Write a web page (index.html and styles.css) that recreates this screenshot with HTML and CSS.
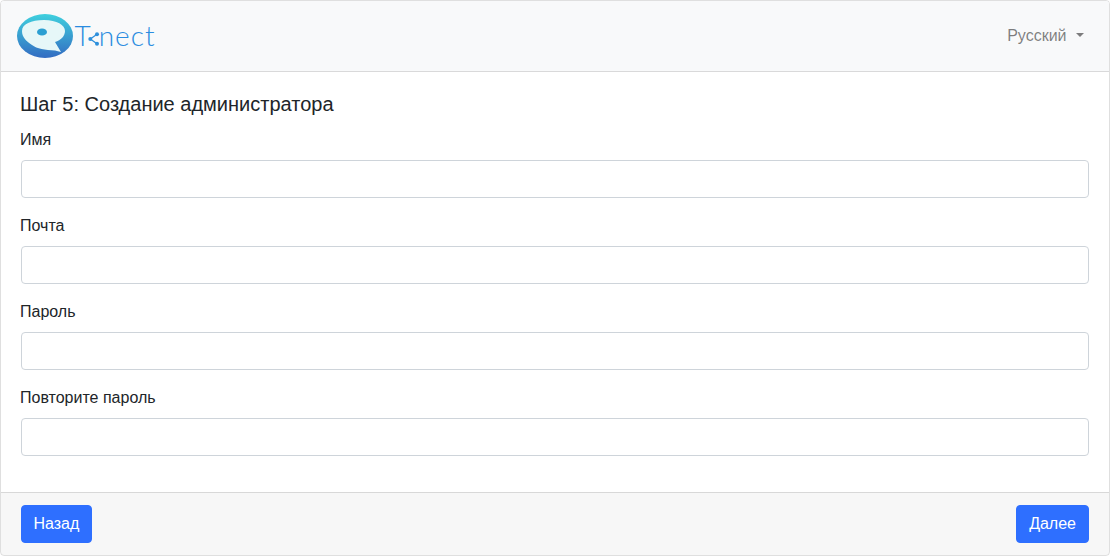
FILE: index.html
```html
<!DOCTYPE html>
<html lang="ru">
<head>
<meta charset="utf-8">
<title>Шаг 5</title>
<link rel="stylesheet" href="styles.css">
</head>
<body>
<div class="card">
  <header class="topbar">
    <a class="brand" href="#">
      <svg class="logo-mark" width="56" height="44" viewBox="0 0 56 44">
        <defs>
          <linearGradient id="lg" x1="0" y1="0" x2="0" y2="1">
            <stop offset="0" stop-color="#3fd0de"/>
            <stop offset="1" stop-color="#336cc2"/>
          </linearGradient>
        </defs>
        <ellipse cx="28" cy="22" rx="28" ry="22" fill="url(#lg)"/>
        <path d="M5 17C5 10 14 6 27 6C40 6 48 11 48 17C48 22 44 26 38 28L44 38L38 36.500C28 36 20 35 15 31C9 27 5 23 5 17Z" fill="#e6f7f8"/>
        <ellipse cx="25" cy="18" rx="5" ry="3.600" fill="#2b9fd2"/>
      </svg>
      <span class="logo-text logo-t">T</span>
      <svg class="logo-share" width="12" height="14" viewBox="0 0 12 14">
        <path d="M9 2.200L2.300 7L9 11.800" fill="none" stroke="#2f90dc" stroke-width="1.300"/>
        <circle cx="9" cy="2.200" r="2" fill="#2f90dc"/>
        <circle cx="2.300" cy="7" r="2" fill="#2f90dc"/>
        <circle cx="9" cy="11.800" r="2" fill="#2f90dc"/>
      </svg>
      <span class="logo-text logo-rest">nect</span>
    </a>
    <a class="lang" href="#">Русский <span class="caret"></span></a>
  </header>
  <main class="body">
    <h5 class="title">Шаг 5: Создание администратора</h5>
    <div class="field"><label class="label">Имя</label><input class="input" type="text"></div>
    <div class="field"><label class="label">Почта</label><input class="input" type="email"></div>
    <div class="field"><label class="label">Пароль</label><input class="input" type="password"></div>
    <div class="field"><label class="label">Повторите пароль</label><input class="input" type="password"></div>
  </main>
  <footer class="footer">
    <button class="btn btn-back">Назад</button>
    <button class="btn">Далее</button>
  </footer>
</div>
</body>
</html>
```
FILE: styles.css
```css
* { box-sizing: border-box; }
html, body { height: 100%; }
body {
  margin: 0;
  font-family: "Liberation Sans", Arial, sans-serif;
  font-size: 16px;
  line-height: 1.5;
  color: #212529;
  background: #fff;
}
.card {
  height: 556px;
  display: flex;
  flex-direction: column;
  border: 1px solid rgba(0, 0, 0, .125);
  border-radius: 4px;
  overflow: hidden;
}
.topbar {
  height: 71px;
  flex: none;
  display: flex;
  align-items: center;
  justify-content: space-between;
  padding: 0 16px;
  background: #f8f9fa;
  border-bottom: 1px solid rgba(0, 0, 0, .125);
}
.brand {
  display: flex;
  align-items: center;
  text-decoration: none;
}
.logo-mark { display: block; }
.logo-text {
  margin-bottom: 2px;
  font-family: Lato, sans-serif;
  font-weight: 300;
  font-size: 28px;
  line-height: 30px;
  letter-spacing: 1px;
  color: #2a8ce0;
}
.logo-t { margin-left: 1.500px; }
.logo-share { display: block; margin: 6px 0 0 -4px; }
.logo-rest { margin-left: -1px; }
.lang {
  display: block;
  padding: 8px 9px 8px 8px;
  color: rgba(0, 0, 0, .5);
  text-decoration: none;
}
.caret {
  display: inline-block;
  margin-left: 5px;
  vertical-align: 4px;
  border-top: 4.800px solid;
  border-left: 4.800px solid transparent;
  border-right: 4.800px solid transparent;
}
.body {
  flex: 1;
  padding: 20px 20px 4px;
}
.title {
  margin: 0 0 12px -1px;
  font-size: 20px;
  font-weight: 500;
  line-height: 1.2;
}
.field { margin-bottom: 16px; }
.label {
  display: block;
  margin: 0 0 8px -1px;
}
.input {
  display: block;
  width: 100%;
  height: 38px;
  padding: 6px 12px;
  font: inherit;
  color: #495057;
  background: #fff;
  border: 1px solid #ced4da;
  border-radius: 4px;
}
.footer {
  flex: none;
  display: flex;
  justify-content: space-between;
  padding: 12px 20px;
  background: rgba(0, 0, 0, .03);
  border-top: 1px solid rgba(0, 0, 0, .125);
}
.btn {
  height: 38px;
  padding: 6px 12px;
  font: inherit;
  color: #fff;
  background: #2e6fff;
  border: 1px solid #2e6fff;
  border-radius: 4px;
}
.btn-back { padding: 6px 11.500px; }
```
